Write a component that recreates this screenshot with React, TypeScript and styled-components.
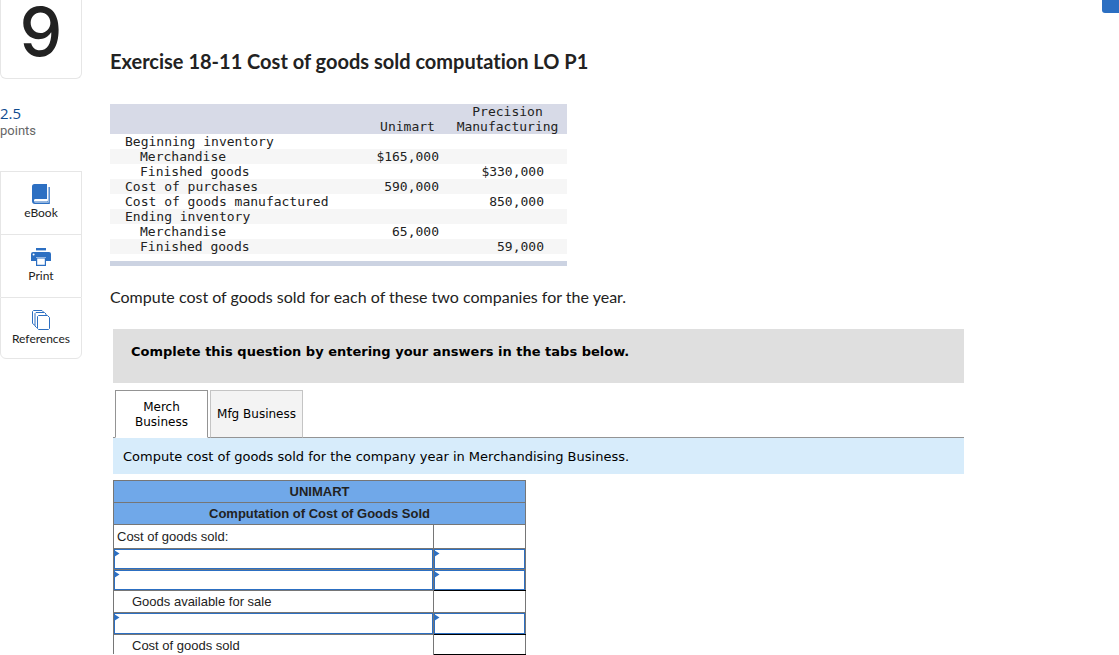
import React from "react";
import styled, { createGlobalStyle } from "styled-components";

const GlobalStyle = createGlobalStyle`
  *, *::before, *::after { box-sizing: border-box; }
  body {
    margin: 0;
    background: #fff;
    color: #222;
    font-family: Lato, "Open Sans", sans-serif;
    font-size: 16px;
    font-variant-ligatures: none;
  }
`;

const sans = `"DejaVu Sans", sans-serif`;
const blue = "#2c6fc2";
const gridLine = "#767676";

const Page = styled.div`
  display: flex;
  align-items: flex-start;
`;

const Sidebar = styled.aside`
  flex: none;
  width: 82px;
`;

const QuestionNumber = styled.div`
  height: 79px;
  border: 1px solid #e6e6e6;
  border-top: 0;
  border-radius: 0 0 6px 6px;
  font-family: Inter, "Open Sans", sans-serif;
  font-size: 68px;
  font-weight: 500;
  line-height: 62px;
  text-align: center;
`;

const Points = styled.div`
  margin: 25px 0 32px;
  font-family: Roboto, sans-serif;
  font-size: 13px;
  line-height: 16px;
  color: #666;
`;

const Score = styled.div`
  font-family: "Open Sans", sans-serif;
  font-size: 15px;
  line-height: 19px;
  color: #0f4b8f;
`;

const Tools = styled.nav`
  display: flex;
  flex-direction: column;
`;

const Tool = styled.button`
  display: flex;
  flex-direction: column;
  align-items: center;
  gap: 1px;
  height: 63px;
  padding: 11px 0 0;
  border: 1px solid #e6e6e6;
  border-bottom: 0;
  background: #fff;
  color: #222;
  font-family: Lato, sans-serif;
  font-size: 12px;
  line-height: 14px;
  cursor: pointer;

  &:last-child {
    height: 62px;
    border-bottom: 1px solid #e6e6e6;
    border-radius: 0 0 6px 6px;
  }
`;

const Main = styled.main`
  flex: 1;
  min-width: 0;
  padding: 49px 0 0 28px;
`;

const Title = styled.h1`
  margin: 0 0 31px;
  font-size: 20px;
  line-height: 24px;
  font-weight: 700;
`;

const FactsTable = styled.table`
  width: 457px;
  table-layout: fixed;
  border-collapse: collapse;
  border-bottom: 5px solid #ccd3e2;
  font-family: "DejaVu Sans Mono", monospace;
  font-size: 13px;
  line-height: 15px;

  th, td { padding: 0; font-weight: 400; height: 15px; }
  thead { background: #d7dae7; }
  thead th { vertical-align: bottom; text-align: center; }
  tbody tr:nth-child(even) { background: #f6f6f6; }
`;

const FactLabel = styled.th<{ $indent?: boolean }>`
  && { padding-left: ${(p) => (p.$indent ? 30 : 15)}px; }
  text-align: left;
  white-space: nowrap;
`;

const Amount = styled.td<{ $inset: number }>`
  && { padding-right: ${(p) => p.$inset}px; }
  text-align: right;
`;

const SpacerCell = styled.td`
  && { height: 9px; }
`;

const Prompt = styled.p`
  margin: 21px 0 22px;
  font-size: 16px;
  line-height: 20px;
`;

const Worksheet = styled.section`
  margin-left: 3px;
  margin-right: 138px;
  font-family: ${sans};
  font-size: 13px;
  color: #000;
`;

const Banner = styled.div`
  height: 54px;
  padding: 15px 18px;
  background: #dfdfdf;
  font-size: 13px;
  font-weight: 700;
  line-height: 16px;
`;

const Tabs = styled.div`
  display: flex;
  gap: 2px;
  margin-top: 7px;
  padding: 0 2px;
  box-shadow: inset 0 -1px 0 #949494;
`;

const Tab = styled.button<{ $active?: boolean }>`
  width: 93px;
  height: 48px;
  padding: 2px 4px 0;
  border: 1px solid ${(p) => (p.$active ? "#949494" : "#c4c4c4")};
  border-bottom-color: ${(p) => (p.$active ? "#fff" : "#949494")};
  background: ${(p) => (p.$active ? "#fff" : "#f3f3f3")};
  color: #000;
  font-family: ${sans};
  font-size: 12px;
  line-height: 15px;
  cursor: pointer;
`;

const Instruction = styled.div`
  padding: 11px 10px 9px;
  background: #d7ecfb;
  font-size: 13px;
  line-height: 16px;
`;

const Sheet = styled.table`
  width: 413px;
  margin-top: 6px;
  table-layout: fixed;
  border-collapse: collapse;
  font-family: "Liberation Sans", Arial, sans-serif;
  font-size: 13px;
  line-height: 15px;
  color: #222;

  th, td { border: 1px solid ${gridLine}; }
`;

const SheetHeading = styled.th`
  height: 22px;
  padding: 0;
  background: #70a8e9;
  background-clip: padding-box;
`;

const SheetLabel = styled.td<{ $indent?: boolean; $open?: boolean }>`
  padding: ${(p) => (p.$open ? 2 : 0)}px 0 0 ${(p) => (p.$indent ? 18 : 3)}px;
  && { ${(p) => p.$open && "border-bottom: 0;"} }
`;

const SheetRow = styled.tr<{ $height: number }>`
  height: ${(p) => p.$height}px;
`;

const EntryCell = styled.td<{ $total?: boolean }>`
  padding: 0;
  && { ${(p) => p.$total && "border-bottom-color: #000;"} }
`;

const EntryWrap = styled.div<{ $height: number }>`
  position: relative;
  height: ${(p) => p.$height}px;
`;

const Entry = styled.input`
  display: block;
  width: 100%;
  height: 100%;
  margin: 0;
  padding: 0 6px;
  border: 1px solid ${blue};
  border-radius: 0;
  background: #fff;
  font: inherit;
  outline: 0;
`;

const Marker = styled.svg`
  position: absolute;
  top: 1px;
  left: 0;
  pointer-events: none;
`;

const CheckButton = styled.button`
  flex: none;
  width: 17px;
  height: 13px;
  padding: 0;
  border: 0;
  border-radius: 0 0 0 3px;
  background: ${blue};
  cursor: pointer;
`;

const BookIcon = () => (
  <svg width="20" height="22" viewBox="0 0 20 22" aria-hidden="true">
    <path d="M3.5 1H16V16H4Q3 16 3 17.5V18.5H16.5V4H18.8V21H4Q1 21 1 18V3.5Q1 1 3.5 1Z" fill={blue} />
    <path d="M3.5 17.5H16.6V3.5" fill="none" stroke="#fff" strokeWidth="1" />
    <path d="M3.5 19.3H17.6V4" fill="none" stroke="#a9c5e7" strokeWidth="1" />
  </svg>
);

const PrintIcon = () => (
  <svg width="20" height="22" viewBox="0 0 20 22" aria-hidden="true">
    <rect x="5" y="2" width="10" height="2.4" fill={blue} />
    <path d="M2 6H18Q20 6 20 8V15H15V11H5V15H0V8Q0 6 2 6Z" fill={blue} />
    <path d="M5.6 12H14.4V19.4H5.6Z" fill="#fff" stroke={blue} strokeWidth="1.2" />
    <circle cx="2.6" cy="8.6" r="1" fill="#fff" />
  </svg>
);

const PagesIcon = () => (
  <svg width="20" height="22" viewBox="0 0 20 22" aria-hidden="true">
    <g fill="#fff" stroke={blue} strokeWidth="1" strokeLinejoin="round">
      <path d="M2.5 1.5H11L12.5 3V16H3.5L1.5 14.5V2.5Z" />
      <path d="M5 3.5H13.5L15 5V18.5H5.5L4 17V4.5Z" />
      <path d="M7.5 6.5H16.5L18.5 8.5V19.5L17.5 20.5H7.5L6.5 19.5V7.5Z" />
    </g>
  </svg>
);

const facts: { label: string; indent?: boolean; unimart?: string; precision?: string }[] = [
  { label: "Beginning inventory" },
  { label: "Merchandise", indent: true, unimart: "$165,000" },
  { label: "Finished goods", indent: true, precision: "$330,000" },
  { label: "Cost of purchases", unimart: "590,000" },
  { label: "Cost of goods manufactured", precision: "850,000" },
  { label: "Ending inventory" },
  { label: "Merchandise", indent: true, unimart: "65,000" },
  { label: "Finished goods", indent: true, precision: "59,000" },
];

const sheetRows: { label?: string; indent?: boolean; height: number; total?: boolean; open?: boolean }[] = [
  { label: "Cost of goods sold:", height: 24 },
  { height: 21 },
  { height: 21, total: true },
  { label: "Goods available for sale", indent: true, height: 22 },
  { height: 22, total: true },
  { label: "Cost of goods sold", indent: true, height: 20, total: true, open: true },
];

const EntryField = ({ label, height }: { label: string; height: number }) => (
  <EntryWrap $height={height}>
    <Entry aria-label={label} />
    <Marker width="6" height="8" viewBox="0 0 6 8" aria-hidden="true">
      <path d="M0 0L5.5 3.5L0 7Z" fill={blue} />
    </Marker>
  </EntryWrap>
);

export default function App() {
  return (
    <>
      <GlobalStyle />
      <Page>
        <Sidebar>
          <QuestionNumber>9</QuestionNumber>
          <Points>
            <Score>2.5</Score>
            points
          </Points>
          <Tools aria-label="Resources">
            <Tool type="button"><BookIcon />eBook</Tool>
            <Tool type="button"><PrintIcon />Print</Tool>
            <Tool type="button"><PagesIcon />References</Tool>
          </Tools>
        </Sidebar>
        <Main>
          <Title>Exercise 18-11 Cost of goods sold computation LO P1</Title>
          <FactsTable>
            <colgroup>
              <col width="257" />
              <col width="81" />
              <col width="119" />
            </colgroup>
            <thead>
              <tr>
                <td />
                <th scope="col">Unimart</th>
                <th scope="col">Precision<br />Manufacturing</th>
              </tr>
            </thead>
            <tbody>
              {facts.map((f, i) => (
                <tr key={i}>
                  <FactLabel scope="row" $indent={f.indent}>{f.label}</FactLabel>
                  <Amount $inset={9}>{f.unimart}</Amount>
                  <Amount $inset={23}>{f.precision}</Amount>
                </tr>
              ))}
            </tbody>
            <tfoot>
              <tr><SpacerCell colSpan={3} /></tr>
            </tfoot>
          </FactsTable>
          <Prompt>Compute cost of goods sold for each of these two companies for the year.</Prompt>
          <Worksheet>
            <Banner>Complete this question by entering your answers in the tabs below.</Banner>
            <Tabs role="tablist">
              <Tab type="button" role="tab" aria-selected="true" $active>Merch Business</Tab>
              <Tab type="button" role="tab" aria-selected="false">Mfg Business</Tab>
            </Tabs>
            <Instruction>Compute cost of goods sold for the company year in Merchandising Business.</Instruction>
            <Sheet>
              <colgroup>
                <col width="320" />
                <col width="92" />
              </colgroup>
              <thead>
                <tr><SheetHeading colSpan={2}>UNIMART</SheetHeading></tr>
                <tr><SheetHeading colSpan={2}>Computation of Cost of Goods Sold</SheetHeading></tr>
              </thead>
              <tbody>
                {sheetRows.map((r, i) =>
                  r.label ? (
                    <SheetRow key={i} $height={r.height}>
                      <SheetLabel $indent={r.indent} $open={r.open}>{r.label}</SheetLabel>
                      <EntryCell $total={r.total} />
                    </SheetRow>
                  ) : (
                    <SheetRow key={i} $height={r.height}>
                      <EntryCell>
                        <EntryField label={`Line ${i} account`} height={r.height - 1} />
                      </EntryCell>
                      <EntryCell $total={r.total}>
                        <EntryField label={`Line ${i} amount`} height={r.height - 1} />
                      </EntryCell>
                    </SheetRow>
                  )
                )}
              </tbody>
            </Sheet>
          </Worksheet>
        </Main>
        <CheckButton type="button" aria-label="Check my work" />
      </Page>
    </>
  );
}
